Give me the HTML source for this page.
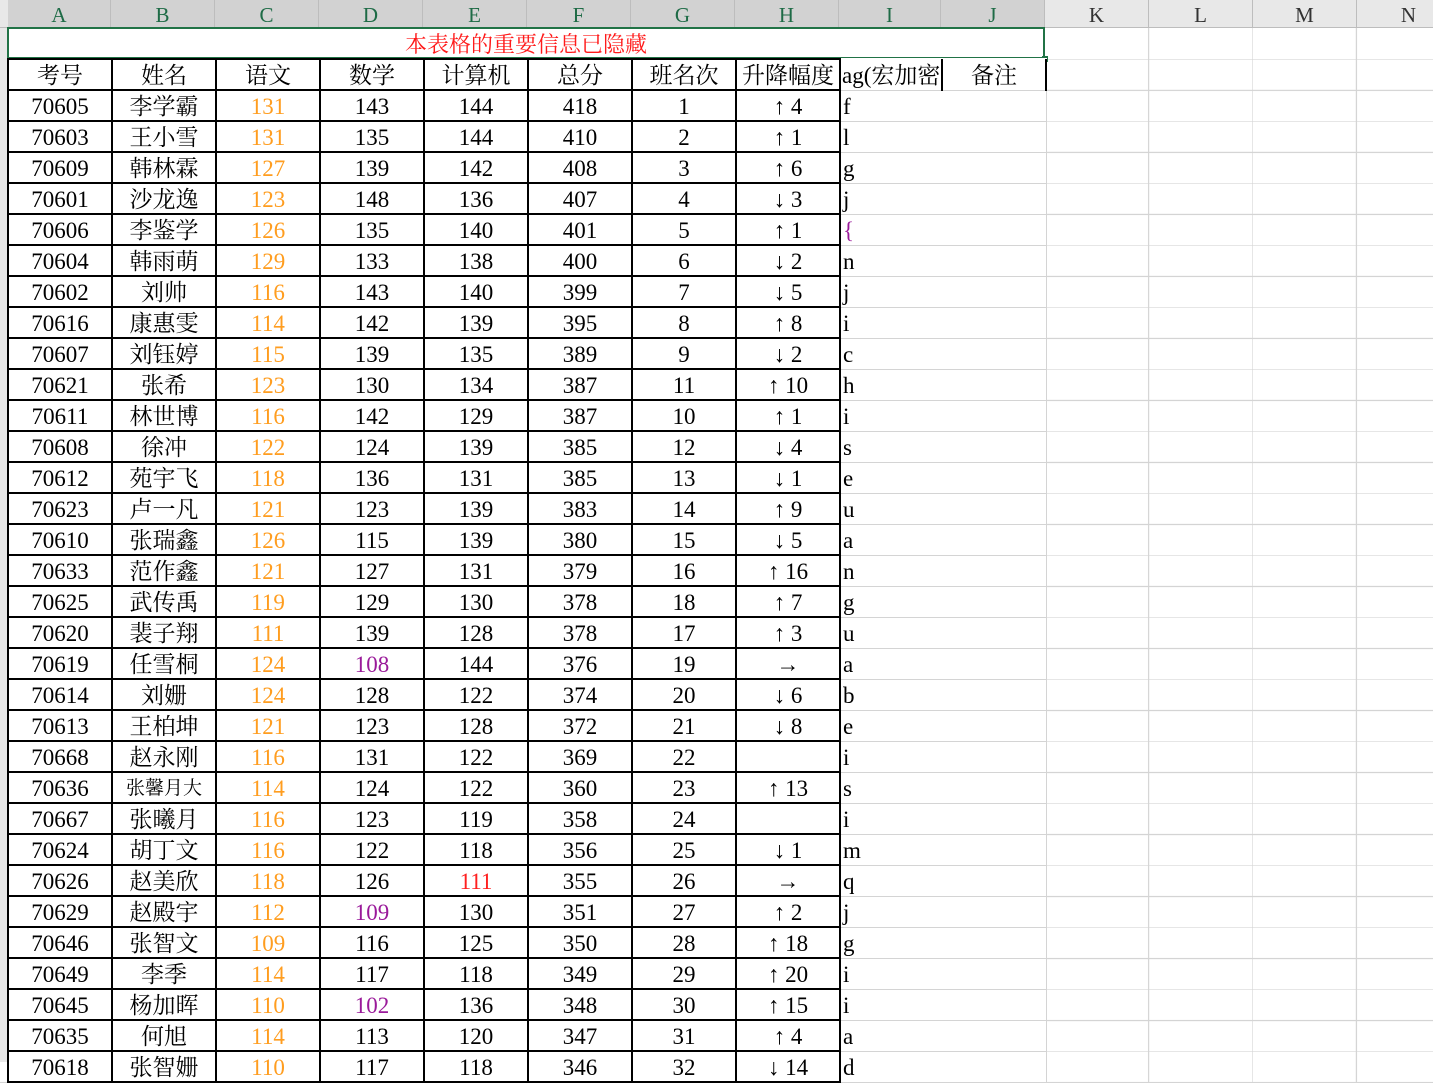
<!DOCTYPE html>
<html><head><meta charset="utf-8"><style>
body{margin:0;width:1433px;height:1062px;overflow:hidden;background:#fff;position:relative;font-family:"Liberation Serif","Noto Serif CJK SC",serif;
background-image:repeating-linear-gradient(to bottom,transparent 0,transparent 30px,#d4d4d4 30px,#d4d4d4 31px),repeating-linear-gradient(to right,transparent 0,transparent 103px,#d4d4d4 103px,#d4d4d4 104px);background-position:0 29px,1045px 0;}
#ch{position:absolute;left:0;top:0;width:1433px;height:27px;background:#e8e8e8;border-bottom:1px solid #bdbdbd;}
#ch div{position:absolute;top:0;height:27px;line-height:30px;text-align:center;font-size:21px;border-right:1px solid #bdbdbd;box-sizing:border-box;color:#333}
#ch div.s{background:#d2d2d2;color:#1e6b46}
#rh{position:absolute;left:0;top:28px;width:7px;height:1034px;background:#e8e8e8;border-right:1px solid #bdbdbd}
#title{position:absolute;left:7px;top:27px;width:1034px;height:28px;border:2px solid #217346;text-align:center;color:#ff1a1a;font-size:22px;line-height:32px;background:#fff}
#title i{position:absolute;right:-5px;bottom:-5px;width:6px;height:6px;background:#217346}
table{position:absolute;left:7px;top:58px;border-collapse:collapse;table-layout:fixed;background:#fff}
td{height:29px;padding:2px 0 0 0;font-size:23px;text-align:center;border:2px solid #000;white-space:nowrap;overflow:hidden;line-height:27px;box-sizing:border-box}
tr{height:31px}
td.i{text-align:left;border:none;border-bottom:1px solid #d4d4d4;padding-left:2px}
td.j{border:none;border-bottom:1px solid #d4d4d4;border-right:1px solid #d4d4d4}
tr.h td.i{border-right:2px solid #000}
tr.h td.j{border-right:2px solid #000;border-left:2px solid #000}
.o{color:#ff9d1f}.p{color:#9a1a9a}.r{color:#ff2020}
</style></head><body>
<div id="ch">
<div class="s" style="left:8px;width:103px">A</div><div class="s" style="left:111px;width:104px">B</div><div class="s" style="left:215px;width:104px">C</div><div class="s" style="left:319px;width:104px">D</div><div class="s" style="left:423px;width:104px">E</div><div class="s" style="left:527px;width:104px">F</div><div class="s" style="left:631px;width:104px">G</div><div class="s" style="left:735px;width:104px">H</div><div class="s" style="left:839px;width:102px">I</div><div class="s" style="left:941px;width:104px">J</div><div style="left:1045px;width:104px">K</div><div style="left:1149px;width:104px">L</div><div style="left:1253px;width:104px">M</div><div style="left:1357px;width:104px">N</div>
</div>
<div id="rh"></div>
<div id="title">本表格的重要信息已隐藏<i></i></div>
<table>
<colgroup><col style="width:104px"><col style="width:104px"><col style="width:104px"><col style="width:104px"><col style="width:104px"><col style="width:104px"><col style="width:104px"><col style="width:104px"><col style="width:102px"><col style="width:104px"></colgroup>
<tr class="h"><td>考号</td><td>姓名</td><td>语文</td><td>数学</td><td>计算机</td><td>总分</td><td>班名次</td><td>升降幅度</td><td class="i" style="padding-left:1px">ag(宏加密</td><td class="j">备注</td></tr>
<tr><td>70605</td><td>李学霸</td><td class="o">131</td><td>143</td><td>144</td><td>418</td><td>1</td><td>↑ 4</td><td class="i">f</td><td class="j"></td></tr>
<tr><td>70603</td><td>王小雪</td><td class="o">131</td><td>135</td><td>144</td><td>410</td><td>2</td><td>↑ 1</td><td class="i">l</td><td class="j"></td></tr>
<tr><td>70609</td><td>韩林霖</td><td class="o">127</td><td>139</td><td>142</td><td>408</td><td>3</td><td>↑ 6</td><td class="i">g</td><td class="j"></td></tr>
<tr><td>70601</td><td>沙龙逸</td><td class="o">123</td><td>148</td><td>136</td><td>407</td><td>4</td><td>↓ 3</td><td class="i">j</td><td class="j"></td></tr>
<tr><td>70606</td><td>李鉴学</td><td class="o">126</td><td>135</td><td>140</td><td>401</td><td>5</td><td>↑ 1</td><td class="i p">{</td><td class="j"></td></tr>
<tr><td>70604</td><td>韩雨萌</td><td class="o">129</td><td>133</td><td>138</td><td>400</td><td>6</td><td>↓ 2</td><td class="i">n</td><td class="j"></td></tr>
<tr><td>70602</td><td>刘帅</td><td class="o">116</td><td>143</td><td>140</td><td>399</td><td>7</td><td>↓ 5</td><td class="i">j</td><td class="j"></td></tr>
<tr><td>70616</td><td>康惠雯</td><td class="o">114</td><td>142</td><td>139</td><td>395</td><td>8</td><td>↑ 8</td><td class="i">i</td><td class="j"></td></tr>
<tr><td>70607</td><td>刘钰婷</td><td class="o">115</td><td>139</td><td>135</td><td>389</td><td>9</td><td>↓ 2</td><td class="i">c</td><td class="j"></td></tr>
<tr><td>70621</td><td>张希</td><td class="o">123</td><td>130</td><td>134</td><td>387</td><td>11</td><td>↑ 10</td><td class="i">h</td><td class="j"></td></tr>
<tr><td>70611</td><td>林世博</td><td class="o">116</td><td>142</td><td>129</td><td>387</td><td>10</td><td>↑ 1</td><td class="i">i</td><td class="j"></td></tr>
<tr><td>70608</td><td>徐冲</td><td class="o">122</td><td>124</td><td>139</td><td>385</td><td>12</td><td>↓ 4</td><td class="i">s</td><td class="j"></td></tr>
<tr><td>70612</td><td>苑宇飞</td><td class="o">118</td><td>136</td><td>131</td><td>385</td><td>13</td><td>↓ 1</td><td class="i">e</td><td class="j"></td></tr>
<tr><td>70623</td><td>卢一凡</td><td class="o">121</td><td>123</td><td>139</td><td>383</td><td>14</td><td>↑ 9</td><td class="i">u</td><td class="j"></td></tr>
<tr><td>70610</td><td>张瑞鑫</td><td class="o">126</td><td>115</td><td>139</td><td>380</td><td>15</td><td>↓ 5</td><td class="i">a</td><td class="j"></td></tr>
<tr><td>70633</td><td>范作鑫</td><td class="o">121</td><td>127</td><td>131</td><td>379</td><td>16</td><td>↑ 16</td><td class="i">n</td><td class="j"></td></tr>
<tr><td>70625</td><td>武传禹</td><td class="o">119</td><td>129</td><td>130</td><td>378</td><td>18</td><td>↑ 7</td><td class="i">g</td><td class="j"></td></tr>
<tr><td>70620</td><td>裴子翔</td><td class="o">111</td><td>139</td><td>128</td><td>378</td><td>17</td><td>↑ 3</td><td class="i">u</td><td class="j"></td></tr>
<tr><td>70619</td><td>任雪桐</td><td class="o">124</td><td class="p">108</td><td>144</td><td>376</td><td>19</td><td>→</td><td class="i">a</td><td class="j"></td></tr>
<tr><td>70614</td><td>刘姗</td><td class="o">124</td><td>128</td><td>122</td><td>374</td><td>20</td><td>↓ 6</td><td class="i">b</td><td class="j"></td></tr>
<tr><td>70613</td><td>王柏坤</td><td class="o">121</td><td>123</td><td>128</td><td>372</td><td>21</td><td>↓ 8</td><td class="i">e</td><td class="j"></td></tr>
<tr><td>70668</td><td>赵永刚</td><td class="o">116</td><td>131</td><td>122</td><td>369</td><td>22</td><td></td><td class="i">i</td><td class="j"></td></tr>
<tr><td>70636</td><td style="font-size:19px">张馨月大</td><td class="o">114</td><td>124</td><td>122</td><td>360</td><td>23</td><td>↑ 13</td><td class="i">s</td><td class="j"></td></tr>
<tr><td>70667</td><td>张曦月</td><td class="o">116</td><td>123</td><td>119</td><td>358</td><td>24</td><td></td><td class="i">i</td><td class="j"></td></tr>
<tr><td>70624</td><td>胡丁文</td><td class="o">116</td><td>122</td><td>118</td><td>356</td><td>25</td><td>↓ 1</td><td class="i">m</td><td class="j"></td></tr>
<tr><td>70626</td><td>赵美欣</td><td class="o">118</td><td>126</td><td class="r">111</td><td>355</td><td>26</td><td>→</td><td class="i">q</td><td class="j"></td></tr>
<tr><td>70629</td><td>赵殿宇</td><td class="o">112</td><td class="p">109</td><td>130</td><td>351</td><td>27</td><td>↑ 2</td><td class="i">j</td><td class="j"></td></tr>
<tr><td>70646</td><td>张智文</td><td class="o">109</td><td>116</td><td>125</td><td>350</td><td>28</td><td>↑ 18</td><td class="i">g</td><td class="j"></td></tr>
<tr><td>70649</td><td>李季</td><td class="o">114</td><td>117</td><td>118</td><td>349</td><td>29</td><td>↑ 20</td><td class="i">i</td><td class="j"></td></tr>
<tr><td>70645</td><td>杨加晖</td><td class="o">110</td><td class="p">102</td><td>136</td><td>348</td><td>30</td><td>↑ 15</td><td class="i">i</td><td class="j"></td></tr>
<tr><td>70635</td><td>何旭</td><td class="o">114</td><td>113</td><td>120</td><td>347</td><td>31</td><td>↑ 4</td><td class="i">a</td><td class="j"></td></tr>
<tr><td>70618</td><td>张智姗</td><td class="o">110</td><td>117</td><td>118</td><td>346</td><td>32</td><td>↓ 14</td><td class="i">d</td><td class="j"></td></tr>
</table>
</body></html>
